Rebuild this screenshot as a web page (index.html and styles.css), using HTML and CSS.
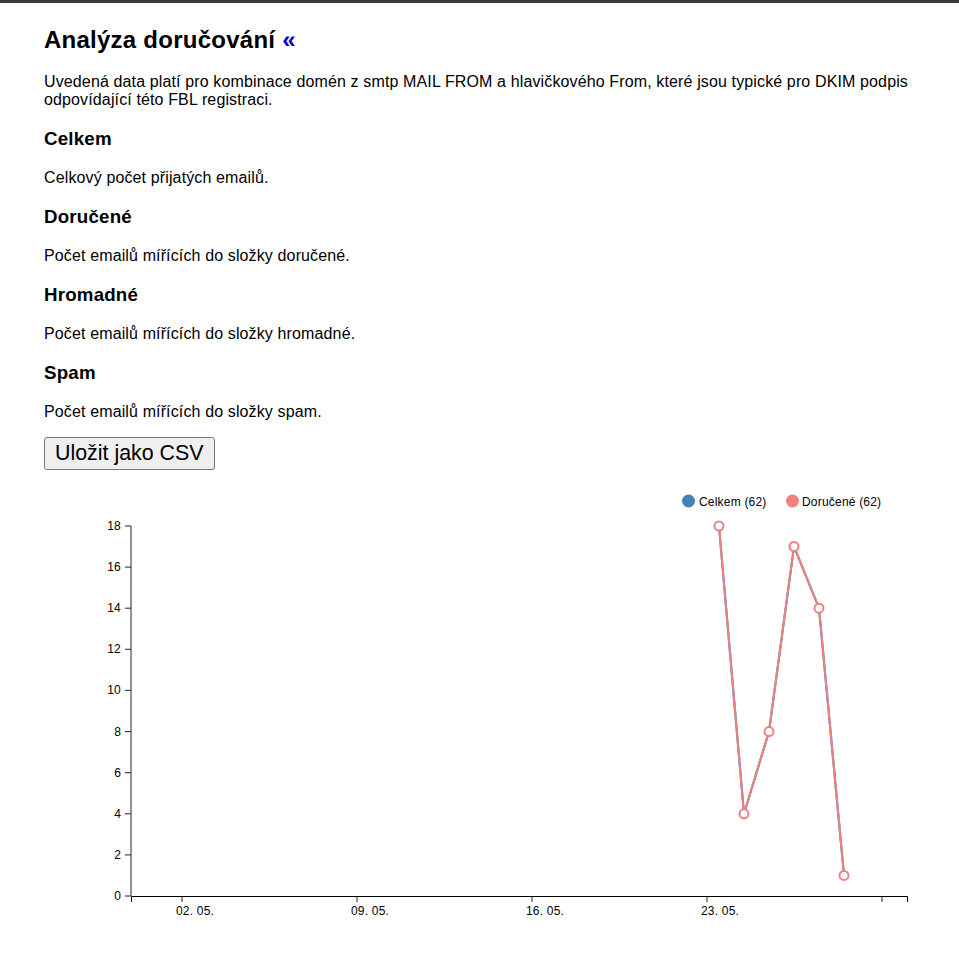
FILE: index.html
```html
<!DOCTYPE html>
<html lang="cs">
<head>
<meta charset="utf-8">
<title>Analýza doručování</title>
<link rel="stylesheet" href="styles.css">
</head>
<body>
<div class="topbar"></div>
<main class="content">
  <h2 class="title">Analýza doručování <a class="back" href="#">«</a></h2>
  <p class="text">Uvedená data platí pro kombinace domén z smtp MAIL FROM a hlavičkového From, které jsou typické pro DKIM podpis odpovídající této FBL registraci.</p>
  <h3 class="sub">Celkem</h3>
  <p class="text">Celkový počet přijatých emailů.</p>
  <h3 class="sub">Doručené</h3>
  <p class="text">Počet emailů mířících do složky doručené.</p>
  <h3 class="sub">Hromadné</h3>
  <p class="text">Počet emailů mířících do složky hromadné.</p>
  <h3 class="sub">Spam</h3>
  <p class="text">Počet emailů mířících do složky spam.</p>
  <button class="csv" type="button">Uložit jako CSV</button>
  <svg class="chart" width="880" height="460" viewBox="0 0 880 460" xmlns="http://www.w3.org/2000/svg">
    <g class="legend">
      <circle cx="644.5" cy="21" r="6.5" fill="#4682b4"/>
      <text x="655" y="25.5">Celkem (62)</text>
      <circle cx="748.5" cy="21" r="6.5" fill="#f08080"/>
      <text x="758" y="25.5">Doručené (62)</text>
    </g>
    <g class="yaxis">
      <path class="domain-y" d="M81,46 H87 V416 H81"/>
      <line x1="81" x2="87" y1="87.1" y2="87.1"/>
      <line x1="81" x2="87" y1="128.2" y2="128.2"/>
      <line x1="81" x2="87" y1="169.3" y2="169.3"/>
      <line x1="81" x2="87" y1="210.4" y2="210.4"/>
      <line x1="81" x2="87" y1="251.6" y2="251.6"/>
      <line x1="81" x2="87" y1="292.7" y2="292.7"/>
      <line x1="81" x2="87" y1="333.8" y2="333.8"/>
      <line x1="81" x2="87" y1="374.9" y2="374.9"/>
      <text x="77" y="50">18</text>
      <text x="77" y="91.1">16</text>
      <text x="77" y="132.2">14</text>
      <text x="77" y="173.3">12</text>
      <text x="77" y="214.4">10</text>
      <text x="77" y="255.6">8</text>
      <text x="77" y="296.7">6</text>
      <text x="77" y="337.8">4</text>
      <text x="77" y="378.9">2</text>
      <text x="77" y="420">0</text>
    </g>
    <g class="xaxis">
      <path class="domain-x" d="M87.5,422 V416.5 H863.5 V422"/>
      <line x1="138" x2="138" y1="416" y2="422"/>
      <line x1="313" x2="313" y1="416" y2="422"/>
      <line x1="488" x2="488" y1="416" y2="422"/>
      <line x1="663" x2="663" y1="416" y2="422"/>
      <line x1="838" x2="838" y1="416" y2="422"/>
      <text x="132" y="435">02. 05.</text>
      <text x="307" y="435">09. 05.</text>
      <text x="482" y="435">16. 05.</text>
      <text x="657" y="435">23. 05.</text>
    </g>
    <polyline class="line-total" points="675,46 700,333.8 725,251.6 750,66.5 775,128.2 800,395.4"/>
    <polyline class="line-delivered" points="675,46 700,333.8 725,251.6 750,66.5 775,128.2 800,395.4"/>
    <g class="dots">
      <circle cx="675" cy="46" r="4.5"/>
      <circle cx="700" cy="333.8" r="4.5"/>
      <circle cx="725" cy="251.6" r="4.5"/>
      <circle cx="750" cy="66.5" r="4.5"/>
      <circle cx="775" cy="128.2" r="4.5"/>
      <circle cx="800" cy="395.4" r="4.5"/>
    </g>
  </svg>
</main>
</body>
</html>
```

FILE: styles.css
```css
html, body {
  margin: 0;
  padding: 0;
  background: #fff;
}

body {
  font-family: "Liberation Sans", Arial, sans-serif;
  color: #000;
}

.topbar {
  height: 3px;
  background: #3a3a3a;
}

.content {
  padding: 0 44px;
}

.title {
  font-size: 24px;
  font-weight: bold;
  letter-spacing: 0.25px;
  margin: 22.5px 0 19px;
}

.back {
  color: #0000cc;
  text-decoration: none;
}

.text {
  font-size: 16px;
  letter-spacing: 0.13px;
  margin: 16px 0;
}

.sub {
  font-size: 18.72px;
  font-weight: bold;
  letter-spacing: 0.2px;
  margin: 19px 0;
}

.csv {
  display: block;
  font-family: "Liberation Sans", Arial, sans-serif;
  font-size: 21.4px;
  color: #000;
  background: #efefef;
  border: 1px solid #767676;
  border-radius: 3px;
  padding: 0 10px;
  margin: 0;
  height: 33px;
  line-height: 31px;
}

.chart {
  display: block;
  margin-top: 10px;
  overflow: visible;
}

.chart text {
  font-family: "Liberation Sans", Arial, sans-serif;
  font-size: 12px;
  letter-spacing: 0.2px;
  fill: #000;
}

.yaxis text {
  text-anchor: end;
}

.domain-y {
  fill: none;
  stroke: #222;
  stroke-width: 1;
}

.yaxis line,
.xaxis line {
  stroke: #222;
  stroke-width: 1;
}

.domain-x {
  fill: none;
  stroke: #000;
  stroke-width: 1;
}

.line-total {
  fill: none;
  stroke: #4682b4;
  stroke-width: 2.2;
}

.line-delivered {
  fill: none;
  stroke: #f08080;
  stroke-width: 2;
}

.dots circle {
  fill: #fff;
  stroke: #f08080;
  stroke-width: 2;
}
```
